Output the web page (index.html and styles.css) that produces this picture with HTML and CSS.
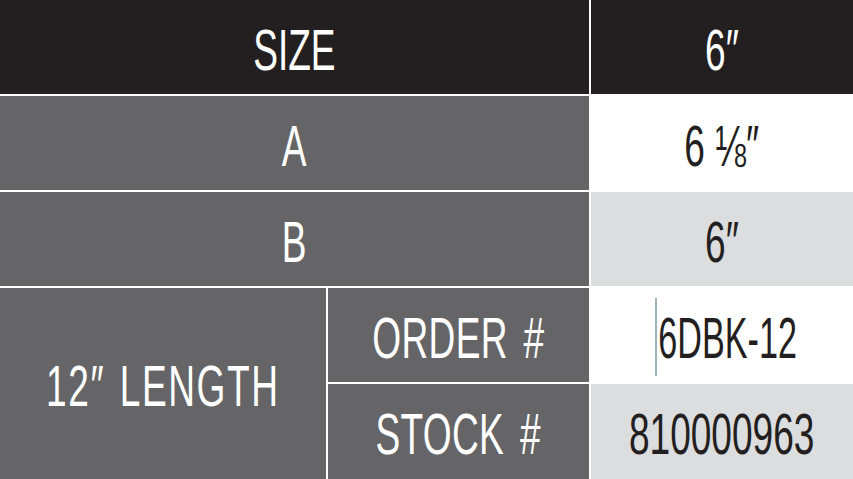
FILE: index.html
```html
<!DOCTYPE html>
<html>
<head>
<meta charset="utf-8">
<link rel="stylesheet" href="styles.css">
</head>
<body>
<div class="table">
  <div class="cell dark span2"><span class="t">SIZE</span></div>
  <div class="cell dark"><span class="t">6″</span></div>
  <div class="cell gray span2"><span class="t">A</span></div>
  <div class="cell white"><span class="t">6 ⅛″</span></div>
  <div class="cell gray span2"><span class="t">B</span></div>
  <div class="cell light"><span class="t">6″</span></div>
  <div class="cell gray rows2"><span class="t len">12″ LENGTH</span></div>
  <div class="cell gray"><span class="t wide">ORDER #</span></div>
  <div class="cell white order"><span class="caret"></span><span class="t code">6DBK-12</span></div>
  <div class="cell gray"><span class="t wide">STOCK #</span></div>
  <div class="cell light"><span class="t">810000963</span></div>
</div>
</body>
</html>
```
FILE: styles.css
```css
html, body {
  margin: 0;
  padding: 0;
  background: #ffffff;
}
.table {
  width: 853px;
  height: 479px;
  display: grid;
  grid-template-columns: 326px 261px 262px;
  grid-template-rows: 94px 94px 94px 94px 95px;
  gap: 2px;
  background: #ffffff;
  font-family: "Liberation Sans", Arial, sans-serif;
  font-size: 57px;
}
.cell {
  display: flex;
  align-items: center;
  justify-content: center;
  position: relative;
  overflow: hidden;
}
.span2 { grid-column: span 2; }
.rows2 { grid-row: span 2; }
.dark { background: #231f20; color: #ffffff; }
.gray { background: #656567; color: #ffffff; }
.white { background: #ffffff; color: #231f20; }
.light { background: #dcdddf; color: #231f20; }
.t {
  display: inline-block;
  transform: scaleX(0.65);
  white-space: nowrap;
  line-height: 1;
  padding-top: 6px;
}
.wide { word-spacing: 8px; letter-spacing: 0.5px; }
.len { word-spacing: 4px; letter-spacing: 2.5px; }
.order { padding-left: 12px; }
.code { transform: scaleX(0.6); }
.caret {
  position: absolute;
  left: 64px;
  top: 10px;
  width: 2px;
  height: 78px;
  background: #9fb1bb;
}
```
